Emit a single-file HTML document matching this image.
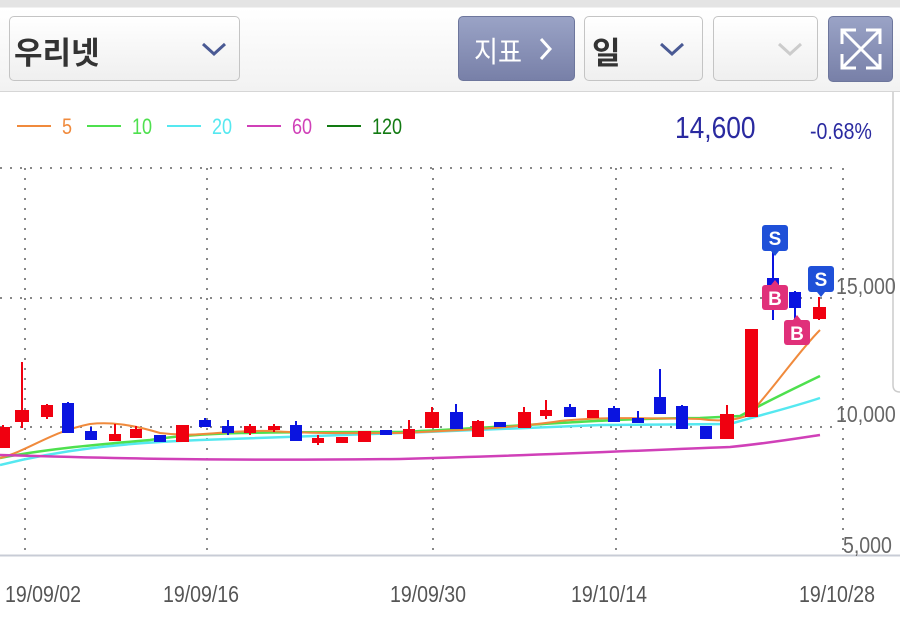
<!DOCTYPE html>
<html><head><meta charset="utf-8"><style>
*{margin:0;padding:0;box-sizing:border-box}
body{width:900px;height:630px;overflow:hidden;background:#fff;font-family:"Liberation Sans","Noto Sans CJK KR",sans-serif;position:relative}
.top{position:absolute;left:0;top:0;width:900px;height:92px;background:linear-gradient(#e4e4e4 0,#e4e4e4 7px,#fff 8px,#f2f2f2 91px);border-bottom:1px solid #d6d6d6}
.box{position:absolute;top:16px;height:65px;border:1px solid #c4c4c4;border-radius:5px;background:linear-gradient(#fff,#efefef)}
.btn{position:absolute;top:16px;height:65px;border-radius:5px;background:linear-gradient(#9aa3c6,#7880a8);border:1px solid #6d769c}
.t{position:absolute;white-space:nowrap}
</style></head><body>
<div class="top"></div>
<div class="box" style="left:9px;width:231px"></div>
<div class="t" style="left:14px;top:28px;font-size:31px;color:#333;font-weight:bold">우리넷</div>
<svg class="t" style="left:200px;top:40px" width="28" height="18"><path d="M3 4 L14 14 L25 4" fill="none" stroke="#4a5a94" stroke-width="3"/></svg>
<div class="btn" style="left:458px;width:117px"></div>
<div class="t" style="left:474px;top:29px;font-size:29px;color:#fff;transform:scaleX(0.9);transform-origin:left">지표</div>
<svg class="t" style="left:538px;top:36px" width="16" height="26"><path d="M3 3 L12 13 L3 23" fill="none" stroke="#fff" stroke-width="3"/></svg>
<div class="box" style="left:584px;width:119px"></div>
<div class="t" style="left:592px;top:28px;font-size:31px;color:#333;font-weight:bold">일</div>
<svg class="t" style="left:658px;top:40px" width="28" height="18"><path d="M3 4 L14 14 L25 4" fill="none" stroke="#4a5a94" stroke-width="3"/></svg>
<div class="box" style="left:713px;width:105px"></div>
<svg class="t" style="left:776px;top:40px" width="28" height="18"><path d="M3 4 L14 14 L25 4" fill="none" stroke="#ccc" stroke-width="3"/></svg>
<div class="btn" style="left:828px;width:65px;height:66px"></div>
<svg class="t" style="left:836px;top:24px" width="50" height="50" fill="none" stroke="#fff" stroke-width="3">
<path d="M6 6 L44 44 M44 6 L6 44"/><path d="M6 20 V6 H20 M30 6 H44 V20 M44 30 V44 H30 M20 44 H6 V30"/></svg>
<svg class="t" style="left:0;top:92px" width="900" height="538">
<path d="M893 0 V293 Q893 300 900 300" fill="none" stroke="#ccc" stroke-width="1.5"/>
<g font-size="22">
<line x1="17" y1="34" x2="51" y2="34" stroke="#f08a3c" stroke-width="2"/><text transform="translate(62 42) scale(0.82 1)" fill="#f08a3c">5</text>
<line x1="87" y1="34" x2="121" y2="34" stroke="#4ee04e" stroke-width="2"/><text transform="translate(132 42) scale(0.82 1)" fill="#4ee04e">10</text>
<line x1="167" y1="34" x2="201" y2="34" stroke="#55e8f0" stroke-width="2"/><text transform="translate(212 42) scale(0.82 1)" fill="#55e8f0">20</text>
<line x1="247" y1="34" x2="281" y2="34" stroke="#d040b8" stroke-width="2"/><text transform="translate(292 42) scale(0.82 1)" fill="#d040b8">60</text>
<line x1="327" y1="34" x2="361" y2="34" stroke="#127a12" stroke-width="2"/><text transform="translate(372 42) scale(0.82 1)" fill="#127a12">120</text>
</g>
<text transform="translate(675 46) scale(0.85 1)" font-size="31" fill="#2a2aa0">14,600</text>
<text transform="translate(810 47) scale(0.85 1)" font-size="23" fill="#2a2aa0">-0.68%</text>
</svg>
<svg class="t" style="left:0;top:0" width="900" height="630">
<g stroke="#888" stroke-width="2" stroke-dasharray="2 8">
<line x1="0" y1="168" x2="840" y2="168"/><line x1="0" y1="298" x2="840" y2="298"/><line x1="0" y1="427" x2="840" y2="427"/>
<line x1="25" y1="168" x2="25" y2="555"/><line x1="207" y1="168" x2="207" y2="555"/><line x1="433" y1="168" x2="433" y2="555"/><line x1="616" y1="168" x2="616" y2="555"/><line x1="843" y1="168" x2="843" y2="555"/>
</g>
<line x1="0" y1="555.5" x2="900" y2="555.5" stroke="#c8ccd6" stroke-width="2"/>
<g font-size="23" fill="#666">
<text transform="translate(836 294) scale(0.85 1)">15,000</text><text transform="translate(836 422) scale(0.85 1)">10,000</text><text transform="translate(843 553) scale(0.85 1)">5,000</text>
</g>
<g font-size="23" fill="#555">
<text transform="translate(5 602) scale(0.85 1)">19/09/02</text><text transform="translate(163 602) scale(0.85 1)">19/09/16</text><text transform="translate(390 602) scale(0.85 1)">19/09/30</text><text transform="translate(571 602) scale(0.85 1)">19/10/14</text><text transform="translate(799 602) scale(0.85 1)">19/10/28</text>
</g>
<g fill="none" stroke-width="2.5">
<path d="M0 465 C60 450 120 443 200 440 S500 430 600 425 L730 424 C760 415 790 408 820 398" stroke="#55e8f0"/>
<path d="M0 458 C40 450 90 445 150 440 C200 432 260 432 400 432 C500 428 600 418 700 418 L740 416 C770 400 795 388 820 376" stroke="#4ee04e"/>
<path d="M0 458 C30 450 50 432 90 424 C110 422 130 424 160 433 C200 438 220 430 270 431 C320 434 360 433 400 433 C470 430 520 427 560 421 C600 417 640 418 700 419 C720 422 740 420 750 414 C780 380 800 350 820 330" stroke="#f08a3c" stroke-width="2"/>
<path d="M0 455 C100 458 200 461 400 459 C550 455 650 450 730 447 C770 443 800 438 820 435" stroke="#d040b8"/>
</g>
<g stroke-width="2">
<g stroke="#f00010" fill="#f00010">
<line x1="3" y1="425" x2="3" y2="448"/><rect x="-3" y="428" width="12" height="19"/>
<line x1="22" y1="362" x2="22" y2="428"/><rect x="16" y="411" width="12" height="10"/>
<line x1="47" y1="404" x2="47" y2="419"/><rect x="42" y="406" width="10" height="10"/>
<line x1="115" y1="424" x2="115" y2="441"/><rect x="110" y="435" width="10" height="5"/>
<line x1="136" y1="426" x2="136" y2="438"/><rect x="131" y="430" width="10" height="7"/>
<rect x="177" y="426" width="11" height="15"/>
<line x1="250" y1="424" x2="250" y2="435"/><rect x="245" y="427" width="10" height="5"/>
<line x1="274" y1="424" x2="274" y2="432"/><rect x="269" y="427" width="10" height="2"/>
<line x1="318" y1="435" x2="318" y2="445"/><rect x="313" y="439" width="10" height="3"/>
<rect x="337" y="438" width="10" height="4"/>
<rect x="359" y="432" width="11" height="9"/>
<line x1="409" y1="420" x2="409" y2="439"/><rect x="404" y="430" width="10" height="8"/>
<line x1="432" y1="407" x2="432" y2="427"/><rect x="426" y="413" width="12" height="14"/>
<line x1="478" y1="420" x2="478" y2="437"/><rect x="473" y="422" width="10" height="14"/>
<line x1="524" y1="407" x2="524" y2="427"/><rect x="519" y="413" width="11" height="14"/>
<line x1="546" y1="400" x2="546" y2="419"/><rect x="541" y="411" width="10" height="4"/>
<rect x="588" y="411" width="10" height="6"/>
<line x1="727" y1="405" x2="727" y2="438"/><rect x="721" y="415" width="12" height="23"/>
<rect x="746" y="330" width="11" height="86"/>
<line x1="819" y1="297" x2="819" y2="320"/><rect x="814" y="308" width="11" height="10"/>
</g>
<g stroke="#0a14e0" fill="#0a14e0">
<line x1="68" y1="402" x2="68" y2="432"/><rect x="63" y="404" width="10" height="28"/>
<line x1="91" y1="427" x2="91" y2="439"/><rect x="86" y="432" width="10" height="7"/>
<rect x="155" y="436" width="10" height="5"/>
<line x1="205" y1="418" x2="205" y2="426"/><rect x="200" y="421" width="10" height="5"/>
<line x1="228" y1="420" x2="228" y2="435"/><rect x="223" y="427" width="10" height="5"/>
<line x1="296" y1="421" x2="296" y2="440"/><rect x="291" y="426" width="10" height="14"/>
<rect x="381" y="431" width="10" height="3"/>
<line x1="456" y1="404" x2="456" y2="428"/><rect x="451" y="413" width="11" height="15"/>
<rect x="495" y="423" width="10" height="3"/>
<line x1="570" y1="404" x2="570" y2="416"/><rect x="565" y="408" width="10" height="8"/>
<line x1="614" y1="406" x2="614" y2="421"/><rect x="609" y="409" width="10" height="12"/>
<line x1="638" y1="411" x2="638" y2="423"/><rect x="633" y="419" width="10" height="3"/>
<line x1="660" y1="369" x2="660" y2="413"/><rect x="655" y="398" width="10" height="15"/>
<line x1="682" y1="405" x2="682" y2="428"/><rect x="677" y="407" width="10" height="21"/>
<rect x="701" y="427" width="10" height="11"/>
<line x1="773" y1="250" x2="773" y2="320"/><rect x="768" y="279" width="10" height="19"/>
<line x1="795" y1="291" x2="795" y2="320"/><rect x="790" y="293" width="10" height="14"/>
</g>
</g>
<g font-size="19" font-weight="bold" fill="#fff" text-anchor="middle">
<rect x="762" y="225" width="26" height="26" rx="3" fill="#1f50d8"/><path d="M771 251 L775 256 L779 251Z" fill="#1f50d8"/><text x="775" y="245">S</text>
<rect x="808" y="266" width="26" height="26" rx="3" fill="#1f50d8"/><path d="M817 292 L821 297 L825 292Z" fill="#1f50d8"/><text x="821" y="286">S</text>
<rect x="762" y="285" width="26" height="25" rx="3" fill="#e0307a"/><path d="M771 285 L775 280 L779 285Z" fill="#e0307a"/><text x="775" y="305">B</text>
<rect x="784" y="320" width="26" height="25" rx="3" fill="#e0307a"/><path d="M793 320 L797 315 L801 320Z" fill="#e0307a"/><text x="797" y="340">B</text>
</g>
</svg>
</body></html>
